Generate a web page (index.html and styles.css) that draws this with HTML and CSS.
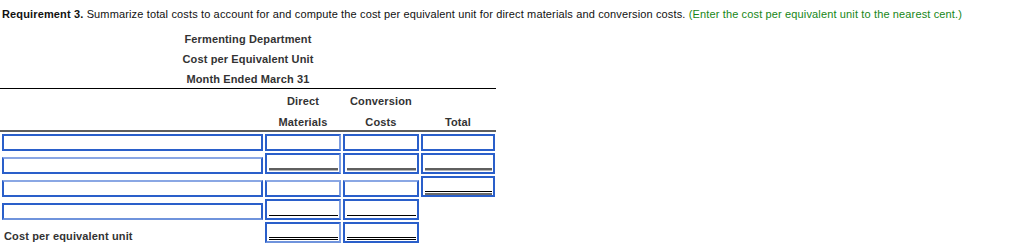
FILE: index.html
```html
<!DOCTYPE html>
<html lang="en">
<head>
<meta charset="utf-8">
<title>Requirement 3</title>
<link rel="stylesheet" href="styles.css">
</head>
<body>
<p class="req"><b>Requirement 3.</b> Summarize total costs to account for and compute the cost per equivalent unit for direct materials and conversion costs. <span class="hint">(Enter the cost per equivalent unit to the nearest cent.)</span></p>
<div class="sheet">
  <div class="titles">
    <div>Fermenting Department</div>
    <div>Cost per Equivalent Unit</div>
    <div>Month Ended March 31</div>
  </div>
  <div class="colhead">
    <div></div>
    <div class="ch"><span>Direct</span><span>Materials</span></div>
    <div class="ch"><span>Conversion</span><span>Costs</span></div>
    <div class="ch"><span>&nbsp;</span><span>Total</span></div>
  </div>
  <div class="rows">
    <div class="cell lab"><div class="box"></div></div>
    <div class="cell"><div class="box sr"></div></div>
    <div class="cell"><div class="box"></div></div>
    <div class="cell"><div class="box"></div></div>

    <div class="cell lab"><div class="box lt"></div></div>
    <div class="cell"><div class="box tall sr"><div class="rule gray"></div></div></div>
    <div class="cell"><div class="box tall"><div class="rule gray"></div></div></div>
    <div class="cell"><div class="box tall"><div class="rule gray"></div></div></div>

    <div class="cell lab"><div class="box lt"></div></div>
    <div class="cell"><div class="box lt sr"></div></div>
    <div class="cell"><div class="box lt"></div></div>
    <div class="cell"><div class="box tall"><div class="rule mixed"></div></div></div>

    <div class="cell lab"><div class="box lb"></div></div>
    <div class="cell"><div class="box tall sr"><div class="rule black"></div></div></div>
    <div class="cell"><div class="box tall"><div class="rule black"></div></div></div>
    <div class="cell"></div>

    <div class="cell lab text">Cost per equivalent unit</div>
    <div class="cell"><div class="box tall sr lb"><div class="rule double"></div></div></div>
    <div class="cell"><div class="box tall"><div class="rule double"></div></div></div>
    <div class="cell"></div>
  </div>
</div>
</body>
</html>
```

FILE: styles.css
```css
html, body {
  margin: 0;
  padding: 0;
  background: #fff;
}

body {
  font-family: "Liberation Sans", Arial, sans-serif;
  font-size: 11px;
  letter-spacing: 0.14px;
  color: #111;
}

.req {
  margin: 0;
  padding: 7px 0 0 2px;
  line-height: 14px;
  white-space: nowrap;
}

.hint {
  color: #168616;
}

.sheet {
  width: 496px;
}

.titles {
  margin-top: 11px;
  display: flex;
  flex-direction: column;
  align-items: center;
  gap: 6px;
  font-weight: bold;
  color: #333;
  line-height: 14px;
}

.colhead {
  margin-top: 2px;
  display: grid;
  grid-template-columns: 264px 78px 78px 76px;
  border-top: 1px solid #000;
  border-bottom: 2px solid #5e5e5e;
  padding: 5px 0 1px;
  font-weight: bold;
  color: #333;
  line-height: 14px;
}

.ch {
  display: flex;
  flex-direction: column;
  align-items: center;
  gap: 7px;
}

.rows {
  margin-top: 2px;
  display: grid;
  grid-template-columns: 264px 78px 78px 76px;
  row-gap: 2px;
  align-items: end;
}

.cell {
  padding: 0 1px;
}

.cell.lab {
  padding-left: 2px;
}

.cell.text {
  font-weight: bold;
  color: #333;
  line-height: 14px;
  padding-left: 4px;
  padding-bottom: 0;
}

.box {
  box-sizing: border-box;
  height: 17px;
  border: 2px solid #2a5fca;
  background: #fff;
  display: flex;
  flex-direction: column;
}

.box.tall {
  height: 21px;
}

.box.lt {
  border-top-color: #8aa7e4;
}

.box.lb {
  border-bottom-color: #6f93dc;
}

.box.sr {
  border-right-color: #7d9de0;
}

.rule {
  margin: auto 1px 2px 2px;
  height: 0;
}

.rule.gray {
  border-bottom: 2px solid #5f5f5f;
  box-shadow: 0 1px 0 #b5b5b5;
}

.rule.black {
  border-bottom: 1px solid #000;
  margin-bottom: 2px;
}

.rule.double {
  border-bottom: 3px double #000;
  margin-bottom: 1px;
}

.rule.mixed {
  border-top: 1px solid #000;
  border-bottom: 2px solid #6a6a6a;
  padding-top: 1px;
  margin-bottom: 0;
}
```
